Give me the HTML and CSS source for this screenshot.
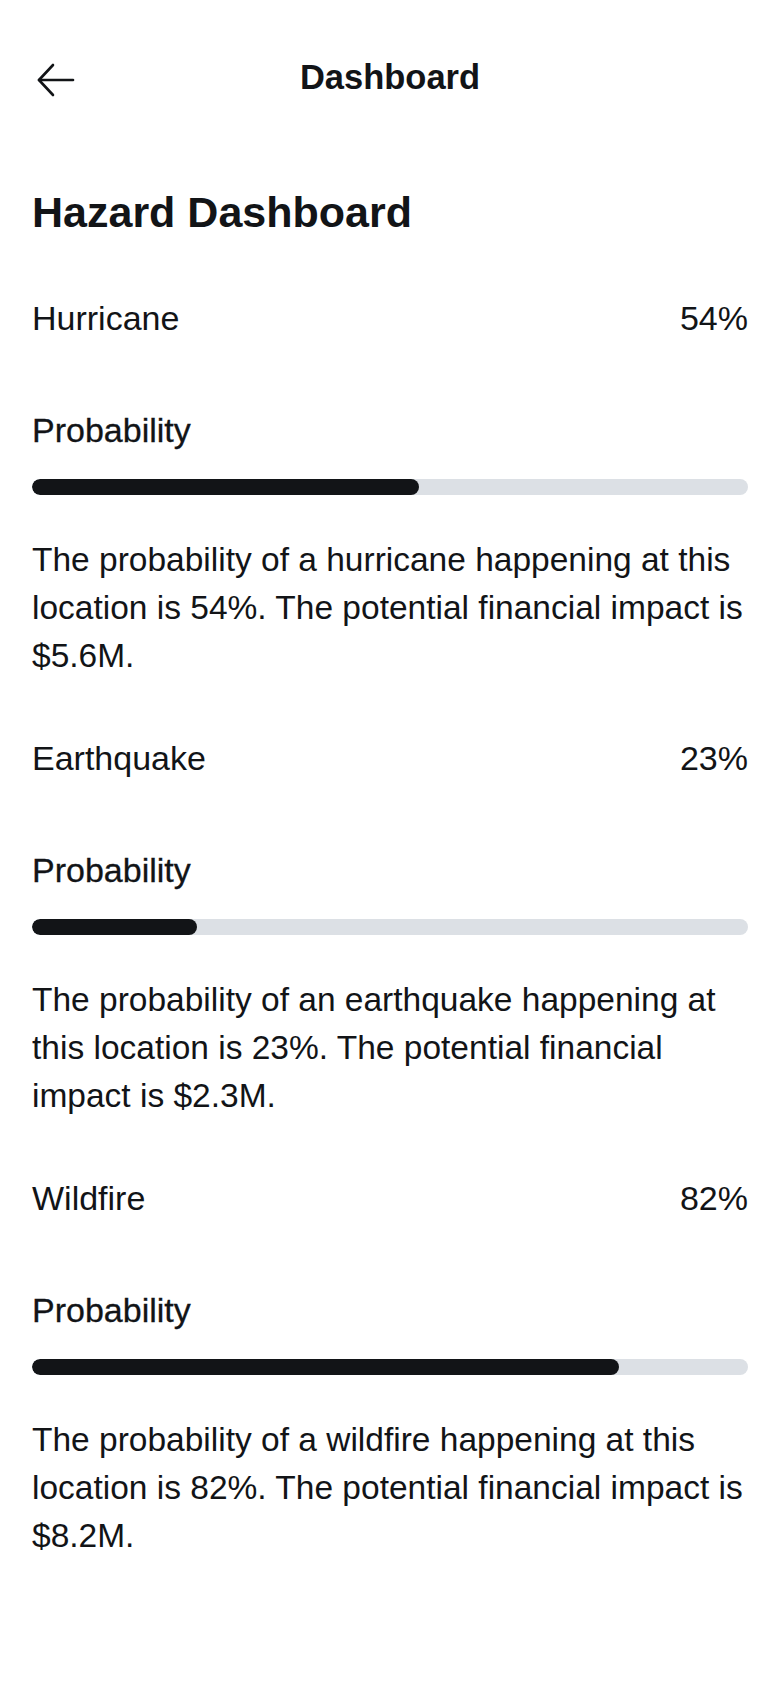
FILE: index.html
```html
<!DOCTYPE html>
<html lang="en">
<head>
<meta charset="utf-8">
<title>Dashboard</title>
<link rel="stylesheet" href="styles.css">
</head>
<body>
<div class="screen">
  <header class="topbar">
    <button class="back" aria-label="Back">
      <svg width="44" height="40" viewBox="0 0 44 40" fill="none" stroke="#121417" stroke-width="2.6" stroke-linecap="round" stroke-linejoin="round">
        <path d="M7 23H41"/>
        <path d="M21 8L7 23L21 38"/>
      </svg>
    </button>
    <div class="topbar-title">Dashboard</div>
    <div class="spacer"></div>
  </header>

  <main class="content">
    <h1 class="page-title">Hazard Dashboard</h1>

    <section class="hazard">
      <div class="hazard-row"><span>Hurricane</span><span>54%</span></div>
      <div class="prob-label">Probability</div>
      <div class="track"><div class="fill" style="width:54%"></div></div>
      <p class="desc">The probability of a hurricane happening at this location is 54%. The potential financial impact is $5.6M.</p>
    </section>

    <section class="hazard">
      <div class="hazard-row"><span>Earthquake</span><span>23%</span></div>
      <div class="prob-label">Probability</div>
      <div class="track"><div class="fill" style="width:23%"></div></div>
      <p class="desc">The probability of an earthquake happening at this location is 23%. The potential financial impact is $2.3M.</p>
    </section>

    <section class="hazard">
      <div class="hazard-row"><span>Wildfire</span><span>82%</span></div>
      <div class="prob-label">Probability</div>
      <div class="track"><div class="fill" style="width:82%"></div></div>
      <p class="desc">The probability of a wildfire happening at this location is 82%. The potential financial impact is $8.2M.</p>
    </section>
  </main>
</div>
</body>
</html>
```

FILE: styles.css
```css
* {
  box-sizing: border-box;
}

html, body {
  margin: 0;
  padding: 0;
  background: #ffffff;
}

body {
  font-family: "Liberation Sans", Arial, sans-serif;
  color: #121417;
}

.screen {
  width: 780px;
  min-height: 1688px;
  padding: 57px 32px 0 32px;
}

.topbar {
  display: grid;
  grid-template-columns: 1fr auto 1fr;
  align-items: start;
  height: 40px;
}

.back {
  width: 44px;
  height: 40px;
  padding: 0;
  margin: 0;
  border: 0;
  background: none;
  display: block;
}

.back svg {
  display: block;
}

.topbar-title {
  font-size: 34.5px;
  line-height: 40px;
  font-weight: 700;
  text-align: center;
}

.content {
  display: flex;
  flex-direction: column;
  gap: 58px;
  margin-top: 90px;
}

.page-title {
  margin: 0 0 3px 0;
  font-size: 43px;
  line-height: 50px;
  font-weight: 700;
}

.hazard {
  display: flex;
  flex-direction: column;
}

.hazard-row {
  display: flex;
  justify-content: space-between;
  font-size: 34px;
  line-height: 40px;
}

.prob-label {
  margin-top: 72px;
  font-size: 34px;
  line-height: 40px;
  -webkit-text-stroke: 0.3px #121417;
}

.track {
  margin-top: 29px;
  height: 16px;
  border-radius: 8px;
  background: #dce0e5;
  overflow: hidden;
}

.fill {
  height: 100%;
  border-radius: 8px;
  background: #121417;
}

.desc {
  margin: 41px 0 0 0;
  font-size: 33.5px;
  line-height: 48px;
}
```
